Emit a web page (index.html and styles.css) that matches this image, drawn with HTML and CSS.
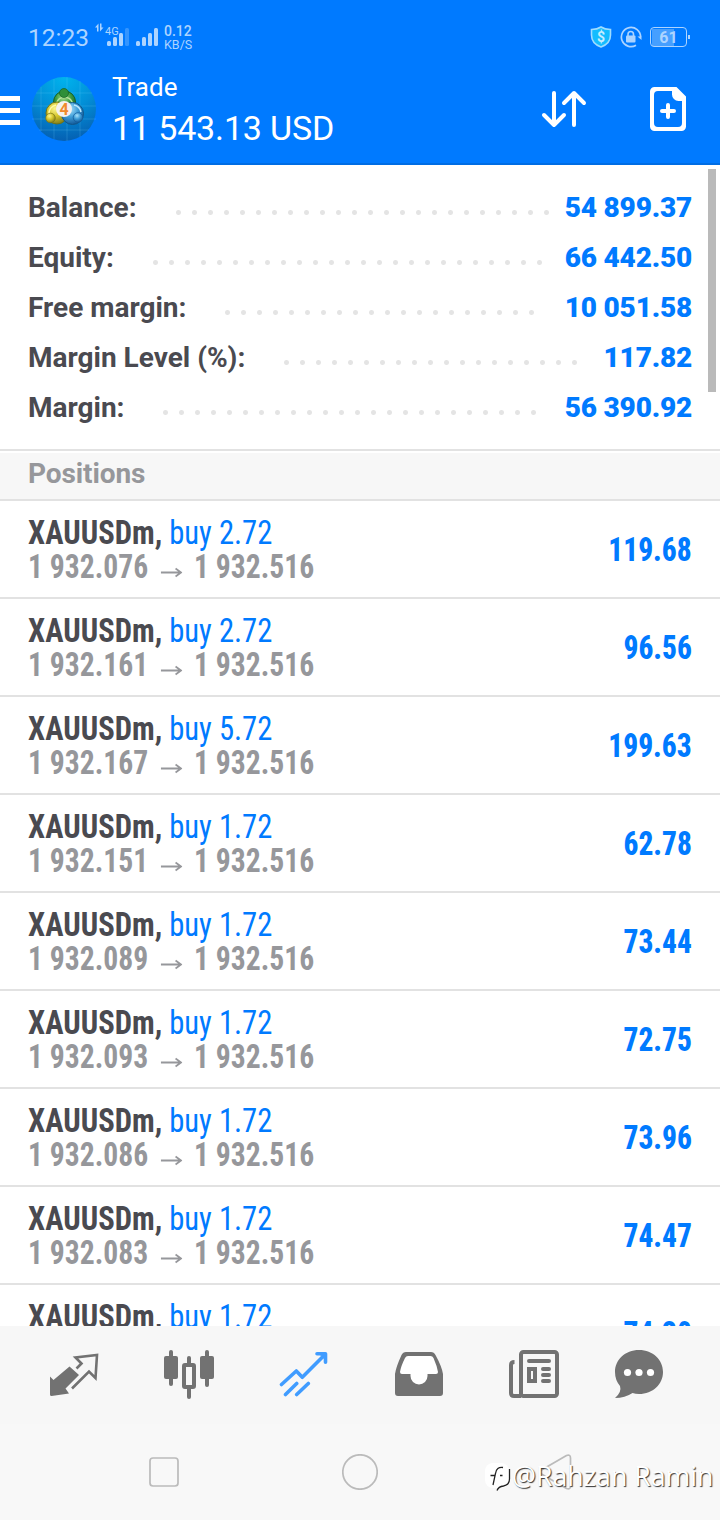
FILE: index.html
```html
<!DOCTYPE html>
<html lang="en">
  <head>
    <meta charset="UTF-8" />
    <meta name="viewport" content="width=device-width, initial-scale=1.0" />
    <title>Trade</title>
    <link rel="stylesheet" href="styles.css">
  </head>
  <body>
    <!-- Header -->
    <header class="header">
      <div class="status">
        <span class="clock">12:23</span>
        <svg class="signals" width="66" height="30" viewBox="0 0 66 30">
          <path d="M0 5.500l3.500-4v8H2V5.500zM8.500 5.500l-3.500 4v-8h1.500v4z" fill="#add4ff" />
          <text x="10" y="13" class="net">4G</text>
          <g fill="#add4ff">
            <rect x="12" y="19" width="4" height="5" rx="1.5" />
            <rect x="18" y="15" width="4" height="9" rx="1.5" />
            <rect x="24" y="11" width="4" height="13" rx="1.5" />
            <rect x="30" y="6" width="4" height="18" rx="1.5" opacity=".3" />
            <rect x="41" y="19" width="4" height="5" rx="1.5" />
            <rect x="47" y="15" width="4" height="9" rx="1.5" />
            <rect x="53" y="11" width="4" height="13" rx="1.5" />
            <rect x="59" y="6" width="4" height="18" rx="1.5" />
          </g>
        </svg>
        <div class="speed"><b>0.12</b><span>KB/S</span></div>
        <div class="status-right">
          <svg width="22" height="22" viewBox="0 0 22 22">
            <path d="M11 1C8 3 5 3.500 1.500 3.500V9c0 6 4 10 9.500 12 5.500-2 9.500-6 9.500-12V3.500C17 3.500 14 3 11 1z" fill="#14bcff" stroke="#9fdcff" stroke-width="1.600" />
            <text x="11" y="16" class="dollar">$</text>
          </svg>
          <svg width="22" height="22" viewBox="0 0 22 22" fill="none" stroke="#add4ff">
            <path d="M16 19.200A9.600 9.600 0 1 1 20.600 11" stroke-width="1.700" />
            <path d="M17.500 10.500h4v3.500z" fill="#add4ff" stroke="none" />
            <rect x="6" y="9.500" width="9.500" height="7" rx="1" fill="#add4ff" stroke="none" />
            <path d="M8 10V8.200a2.700 2.700 0 0 1 5.500 0V10" stroke-width="1.600" />
          </svg>
          <div class="battery"><span>61</span></div>
        </div>
      </div>

      <div class="toolbar">
        <div class="menu"><i></i><i></i><i></i></div>
        <svg class="logo" width="64" height="64" viewBox="0 0 64 64">
          <defs>
            <radialGradient id="sky" cx=".5" cy="0" r="1">
              <stop offset="0" stop-color="#00b4ee" />
              <stop offset=".5" stop-color="#0290d8" />
              <stop offset="1" stop-color="#0560b2" />
            </radialGradient>
            <radialGradient id="green" cx=".45" cy=".3" r=".7">
              <stop offset="0" stop-color="#a4dc88" />
              <stop offset=".5" stop-color="#3b9a3e" />
              <stop offset="1" stop-color="#176024" />
            </radialGradient>
            <radialGradient id="yellow" cx=".4" cy=".3" r=".7">
              <stop offset="0" stop-color="#fbf58c" />
              <stop offset=".5" stop-color="#d5c52d" />
              <stop offset="1" stop-color="#85801a" />
            </radialGradient>
            <radialGradient id="blue" cx=".4" cy=".3" r=".7">
              <stop offset="0" stop-color="#a8e0fa" />
              <stop offset=".5" stop-color="#3f9ed8" />
              <stop offset="1" stop-color="#145c9c" />
            </radialGradient>
          </defs>
          <circle cx="32" cy="32" r="32" fill="url(#sky)" />
          <path d="M9 10v44M22 2v60M35 0v64M48 4v56M4 16h56M0 29h64M0 42h64M7 53h50" stroke="#7bd6ff" stroke-opacity=".2" fill="none" />
          <circle cx="32.500" cy="25" r="11" fill="url(#green)" stroke="#12602a" />
          <path d="M24.500 26a8.500 8.500 0 0 1 16 0" stroke="#b5e29a" stroke-width="1.500" fill="none" />
          <circle cx="25" cy="36" r="11" fill="url(#yellow)" stroke="#6c731c" />
          <path d="M17 37a8.500 8.500 0 0 1 7-9" stroke="#fffaa8" stroke-width="1.500" fill="none" />
          <circle cx="40.500" cy="36.500" r="11" fill="url(#blue)" stroke="#125688" />
          <path d="M42 28a9 9 0 0 1 7 7" stroke="#c2ebff" stroke-width="1.500" fill="none" />
          <circle cx="32" cy="16" r="4.500" fill="#2f8f38" stroke="#176024" stroke-width=".7" />
          <circle cx="18.500" cy="41" r="4.800" fill="url(#yellow)" stroke="#77741b" stroke-width=".7" />
          <circle cx="46" cy="40.500" r="4.800" fill="url(#blue)" stroke="#145c9c" stroke-width=".7" />
          <circle cx="32" cy="32" r="8" fill="#f4f1ee" />
          <text x="32" y="38" class="logo-four">4</text>
        </svg>
        <div class="title">
          <h1>Trade</h1>
          <p>11 543.13 USD</p>
        </div>
        <svg class="sort" width="46" height="38" viewBox="0 0 46 38" fill="none" stroke="#fff" stroke-width="4" stroke-linecap="round" stroke-linejoin="round">
          <path d="M13 3v32M3 25l10 10 10-10M33 35V3M23 13L33 3l10 10" />
        </svg>
        <svg class="new-order" width="36" height="44" viewBox="0 0 36 44">
          <path d="M4.500 0H26.500L36 9.500V39.500a4.500 4.500 0 0 1-4.500 4.500H4.500A4.500 4.500 0 0 1 0 39.500V4.500A4.500 4.500 0 0 1 4.500 0zM8 4a4 4 0 0 0-4 4V36a4 4 0 0 0 4 4H28a4 4 0 0 0 4-4V14H28.500A6.500 6.500 0 0 1 22 7.500V4z" fill="#fff" fill-rule="evenodd" />
          <path d="M18 18v12M12 24h12" stroke="#fff" stroke-width="4" stroke-linecap="round" />
        </svg>
      </div>
    </header>

    <!-- Main Content -->
    <main class="main">
      <section class="account">
        <div class="line"><span>Balance:</span><i class="dots dots-long"></i><b>54 899.37</b></div>
        <div class="line"><span>Equity:</span><i class="dots"></i><b>66 442.50</b></div>
        <div class="line"><span>Free margin:</span><i class="dots"></i><b>10 051.58</b></div>
        <div class="line"><span>Margin Level (%):</span><i class="dots"></i><b>117.82</b></div>
        <div class="line"><span>Margin:</span><i class="dots"></i><b>56 390.92</b></div>
      </section>

      <h2 class="positions-title">Positions</h2>

      <ul class="positions">
        <li>
          <div class="deal"><p><b>XAUUSDm,</b> <em>buy 2.72</em></p>
            <p class="price">1 932.076 <svg class="arrow" viewBox="0 0 24 11"><path d="M0 5.500h22M16.500 1.500l6 4-6 4" /></svg> 1 932.516</p></div>
          <strong>119.68</strong>
        </li>
        <li>
          <div class="deal"><p><b>XAUUSDm,</b> <em>buy 2.72</em></p>
            <p class="price">1 932.161 <svg class="arrow" viewBox="0 0 24 11"><path d="M0 5.500h22M16.500 1.500l6 4-6 4" /></svg> 1 932.516</p></div>
          <strong>96.56</strong>
        </li>
        <li>
          <div class="deal"><p><b>XAUUSDm,</b> <em>buy 5.72</em></p>
            <p class="price">1 932.167 <svg class="arrow" viewBox="0 0 24 11"><path d="M0 5.500h22M16.500 1.500l6 4-6 4" /></svg> 1 932.516</p></div>
          <strong>199.63</strong>
        </li>
        <li>
          <div class="deal"><p><b>XAUUSDm,</b> <em>buy 1.72</em></p>
            <p class="price">1 932.151 <svg class="arrow" viewBox="0 0 24 11"><path d="M0 5.500h22M16.500 1.500l6 4-6 4" /></svg> 1 932.516</p></div>
          <strong>62.78</strong>
        </li>
        <li>
          <div class="deal"><p><b>XAUUSDm,</b> <em>buy 1.72</em></p>
            <p class="price">1 932.089 <svg class="arrow" viewBox="0 0 24 11"><path d="M0 5.500h22M16.500 1.500l6 4-6 4" /></svg> 1 932.516</p></div>
          <strong>73.44</strong>
        </li>
        <li>
          <div class="deal"><p><b>XAUUSDm,</b> <em>buy 1.72</em></p>
            <p class="price">1 932.093 <svg class="arrow" viewBox="0 0 24 11"><path d="M0 5.500h22M16.500 1.500l6 4-6 4" /></svg> 1 932.516</p></div>
          <strong>72.75</strong>
        </li>
        <li>
          <div class="deal"><p><b>XAUUSDm,</b> <em>buy 1.72</em></p>
            <p class="price">1 932.086 <svg class="arrow" viewBox="0 0 24 11"><path d="M0 5.500h22M16.500 1.500l6 4-6 4" /></svg> 1 932.516</p></div>
          <strong>73.96</strong>
        </li>
        <li>
          <div class="deal"><p><b>XAUUSDm,</b> <em>buy 1.72</em></p>
            <p class="price">1 932.083 <svg class="arrow" viewBox="0 0 24 11"><path d="M0 5.500h22M16.500 1.500l6 4-6 4" /></svg> 1 932.516</p></div>
          <strong>74.47</strong>
        </li>
        <li>
          <div class="deal"><p><b>XAUUSDm,</b> <em>buy 1.72</em></p></div>
          <strong>74.30</strong>
        </li>
      </ul>
      <div class="scrollbar"></div>
    </main>

    <!-- Tabs -->
    <nav class="tabs">
      <svg class="tab-quotes" width="50" height="50" viewBox="0 0 50 50">
        <path d="M0 26.500l3.500 3.500L19.500 16.500 29 25 15.500 38.500l3.500 5L1.500 46Q0 46 0 44.500z" fill="#727272" />
        <path d="M26.500 18.500L31.500 13.500 25.500 7.500 47 5 45.500 28l-6.500-6.500L22 38.500" fill="none" stroke="#727272" stroke-width="2.600" />
      </svg>
      <svg width="50" height="50" viewBox="0 0 50 50" fill="#727272">
        <rect x="5" y="0" width="4" height="36" rx="2" />
        <rect x="0" y="6" width="14" height="23" rx="2" />
        <rect x="41" y="0" width="4" height="37" rx="2" />
        <rect x="36" y="6" width="14" height="23" rx="2" />
        <rect x="23" y="6" width="4" height="43" rx="2" />
        <rect x="20" y="15" width="10" height="22" rx="1" fill="#f7f7f7" stroke="#727272" stroke-width="4" />
      </svg>
      <svg width="50" height="50" viewBox="0 0 50 50" fill="none" stroke="#409cff" stroke-width="3.600" stroke-linecap="round" stroke-linejoin="round">
        <path d="M2.500 34.500L17.300 21l6 6.300L44.500 6M6.500 44.500L17.700 33.500M17.700 44.500L29.300 33.500" />
        <path d="M38 3.800H46.500v8.500" />
        <path d="M41 4l5.500 0v5.500z" fill="#409cff" stroke-width="1" />
      </svg>
      <svg width="50" height="50" viewBox="0 0 50 50">
        <path d="M12 2H37q3 0 4.500 3Q48 17 49 24V43q0 3-3 3H4q-3 0-3-3V24Q2 17 7.500 5 9 2 12 2z" fill="#727272" />
        <path d="M14 6q-2 0-3 2Q7 16 6 22q0 2 2 2h8.500v2a8.500 8.500 0 0 0 17 0v-2H42q2 0 2-2-1-6-4.500-14-1-2-3-2z" fill="#fff" />
      </svg>
      <svg width="50" height="50" viewBox="0 0 50 50" fill="none" stroke="#727272" stroke-width="4" stroke-linecap="round">
        <rect x="12" y="2" width="36" height="44" rx="2.500" />
        <path d="M5.500 12q-3.500 0-3.500 3v28q0 3 3 3h7" stroke-linecap="butt" />
        <path d="M20 11h20M34 19h6M34 25h6M34 31h6" />
        <rect x="20" y="19" width="6" height="12" />
      </svg>
      <svg class="tab-chat" width="50" height="50" viewBox="0 0 50 50">
        <path d="M25 0C39 0 49 10 49 22S39 44 25 44q-3.500 0-6.500-1Q11 48 1 48q7-6 5-12-5-6-5-14C1 10 11 0 25 0z" fill="#727272" />
        <g fill="#fff"><circle cx="13.500" cy="22.500" r="3.600" /><circle cx="25" cy="22.500" r="3.600" /><circle cx="36.500" cy="22.500" r="3.600" /></g>
      </svg>
    </nav>

    <!-- System navigation -->
    <footer class="footer">
      <svg width="36" height="36" viewBox="0 0 36 36"><rect x="4" y="4" width="28" height="28" rx="3" /></svg>
      <svg width="36" height="36" viewBox="0 0 36 36"><circle cx="18" cy="18" r="17.200" /></svg>
      <svg width="36" height="36" viewBox="0 0 36 36"><path d="M28.500 1.500L3.500 16q-3 2 0 4l25 14.500q4 1.500 4-2.500V4q0-4-4-2.500z" /></svg>
      <div class="author">
        <svg width="28" height="30" viewBox="0 0 28 30">
          <rect x="1" y="1" width="24" height="25" rx="8" fill="#fff" />
          <path d="M25.500 7v10q0 6-6 7-5 .500-6.500 4.500M19 5.500q-6.500-1-7.500 6L9 23M6.500 13.500h5M16 13.500h2.500" fill="none" stroke="#222" stroke-width="1.300" />
        </svg>
        <span>@Rahzan Ramin</span>
      </div>
    </footer>
  </body>
</html>
```
FILE: styles.css
```css
* {
  box-sizing: border-box;
}
body {
  margin: 0;
  width: 720px;
  height: 1520px;
  display: flex;
  flex-direction: column;
  overflow: hidden;
  background-color: #fff;
  font-family: Roboto, "Liberation Sans", sans-serif;
}
h1,
h2,
p,
ul {
  margin: 0;
  padding: 0;
}
svg {
  display: block;
  flex-shrink: 0;
}

/* Header */
.header {
  height: 165px;
  flex-shrink: 0;
  background-color: #007aff;
  border-bottom: 2px solid #006de4;
  color: white;
}
.status {
  height: 77px;
  padding: 0 30px 0 28px;
  display: flex;
  align-items: center;
  color: #add4ff;
}
.clock {
  width: 67px;
  margin-top: -2px;
  font-size: 24.5px;
  font-weight: 450;
  line-height: 30px;
}
.signals {
  margin-top: -3px;
}
.net {
  font-size: 11px;
  fill: #add4ff;
}
.speed {
  margin-left: 3px;
  margin-top: -1px;
  display: flex;
  flex-direction: column;
  font-size: 13px;
  line-height: 13px;
}
.speed b {
  font-weight: 500;
  font-size: 14px;
}
.speed span {
  font-size: 12.5px;
  font-weight: 450;
}
.status-right {
  margin-left: auto;
  margin-top: -4px;
  display: flex;
  align-items: center;
  gap: 8px;
}
.dollar {
  font-size: 14px;
  font-weight: 700;
  text-anchor: middle;
  fill: #c5ecff;
}
.battery {
  width: 37px;
  height: 20px;
  margin-right: 3px;
  border: 1px solid #add4ff;
  border-radius: 4px;
  background: linear-gradient(to right, #469fff 22px, transparent 22px) 1px 1px no-repeat;
  font-size: 16px;
  font-weight: 700;
  line-height: 19px;
  text-align: center;
  position: relative;
}
.battery::after {
  content: "";
  position: absolute;
  right: -4px;
  top: 7px;
  width: 2px;
  height: 4px;
  background-color: #add4ff;
}
.toolbar {
  height: 64px;
  display: flex;
  align-items: center;
}
.menu {
  width: 20px;
  margin-top: 2px;
  display: flex;
  flex-direction: column;
  gap: 7px;
}
.menu i {
  height: 5px;
  background-color: white;
}
.logo {
  margin-left: 12px;
}
.logo-four {
  font-size: 16px;
  font-weight: 700;
  text-anchor: middle;
  fill: #f08a2c;
}
.title {
  width: 429px;
  margin-left: 16px;
}
.title h1 {
  font-size: 26px;
  font-weight: 400;
  line-height: 30px;
}
.title p {
  margin-top: 8px;
  font-size: 34px;
  line-height: 36px;
  letter-spacing: -0.15px;
}
.new-order {
  margin-left: 63px;
}

/* Main */
.main {
  height: 1161px;
  flex-shrink: 0;
  overflow: hidden;
  position: relative;
}
.account {
  height: 286px;
  padding: 17px 28px 0;
  border-bottom: 2px solid #e2e2e2;
}
.line {
  height: 50px;
  display: flex;
  align-items: center;
  color: #4a4a50;
  font-size: 28px;
  font-weight: 700;
}
.line b {
  color: #007aff;
  letter-spacing: -0.2px;
}
.dots {
  flex: 1;
  height: 5px;
  margin: 11px 21px 0 39px;
  background: radial-gradient(circle at 2.5px 2.5px, #e4e4e4 2px, transparent 3px) 0 0 / 16px 5px repeat-x;
}
.dots-long {
  margin-right: 14px;
}
.positions-title {
  height: 48px;
  margin-top: 2px;
  padding-left: 28px;
  border-bottom: 2px solid #e2e2e2;
  background-color: #f7f7f7;
  color: #96979b;
  font-size: 28px;
  line-height: 41px;
  letter-spacing: -0.1px;
}
.positions {
  list-style: none;
}
.positions li {
  height: 98px;
  padding: 15px 28px 0;
  border-bottom: 2px solid #e2e2e2;
  display: flex;
  justify-content: space-between;
  font-size: 33px;
  font-stretch: 75%;
}
.deal p {
  height: 34px;
  line-height: 34px;
  white-space: nowrap;
  color: #4a4a50;
  transform: scaleX(0.928);
  transform-origin: left;
}
.deal em {
  font-style: normal;
  color: #007aff;
}
.deal .price {
  color: #96979b;
  font-weight: 700;
  transform: scaleX(0.897);
}
.arrow {
  display: inline-block;
  width: 24px;
  height: 11px;
  margin: 0 6px;
  fill: none;
  stroke: #96979b;
  stroke-width: 2;
}
.positions strong {
  line-height: 68px;
  color: #007aff;
  font-weight: 800;
  transform: scaleX(0.89);
  transform-origin: right;
}
.scrollbar {
  position: absolute;
  top: 4px;
  right: 4px;
  width: 8px;
  height: 223px;
  background-color: #bababa;
}

/* Tabs */
.tabs {
  height: 98px;
  flex-shrink: 0;
  padding: 24px 0 0 50px;
  display: flex;
  gap: 65px;
  background-color: #f7f7f7;
}
.tab-quotes {
  margin-right: -1px;
}
.tab-chat {
  margin-left: -10px;
}

/* System navigation */
.footer {
  flex: 1;
  padding: 30px 146px 0;
  display: flex;
  justify-content: space-between;
  background-color: #f8f8f8;
  fill: none;
  stroke: #bbb;
  stroke-width: 1.7;
  position: relative;
}
.author {
  position: absolute;
  left: 484px;
  top: 38px;
  display: flex;
  stroke: none;
}
.author span {
  font-family: "Open Sans", "Noto Sans", sans-serif;
  font-size: 26.7px;
  line-height: 28px;
  color: white;
  white-space: nowrap;
  text-shadow: 1px 1px 1px #333;
}
```
